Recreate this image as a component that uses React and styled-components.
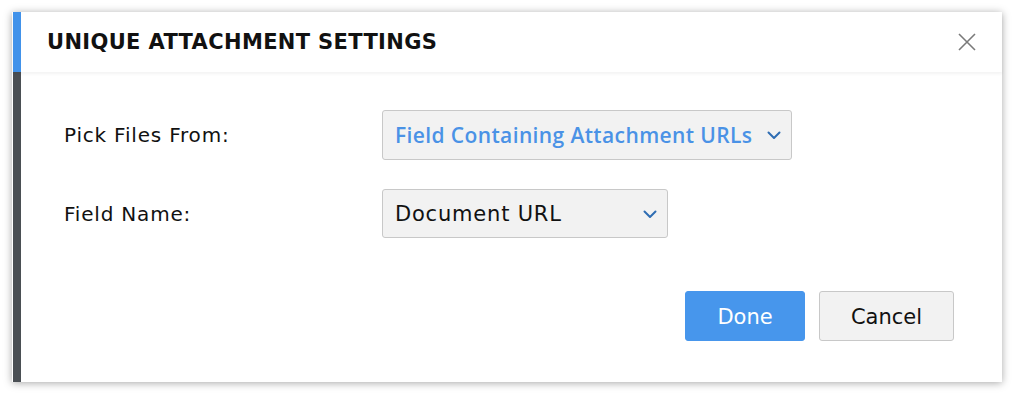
import styled, { createGlobalStyle } from 'styled-components';

const GlobalStyle = createGlobalStyle`
  html, body {
    margin: 0;
    padding: 0;
    background: #ffffff;
  }
  body {
    font-family: "DejaVu Sans", "Open Sans", Arial, sans-serif;
    color: #111;
  }
`;

const Page = styled.div`
  padding: 12px;
`;

const Dialog = styled.div`
  width: 989px;
  height: 370px;
  background: #fff;
  border-left: 1px solid #fff;
  display: flex;
  flex-direction: column;
  box-shadow: 0 1px 8px rgba(0, 0, 0, 0.35);
`;

const Header = styled.div`
  height: 60px;
  flex: none;
  display: flex;
  align-items: center;
  justify-content: space-between;
  padding: 0 24px 0 26px;
  border-left: 8px solid #4192ea;
  box-shadow: 0 2px 3px rgba(0, 0, 0, 0.05);
  position: relative;
  z-index: 1;
`;

const Title = styled.h1`
  margin: 0;
  font-size: 21px;
  font-weight: 700;
  letter-spacing: 0.35px;
  color: #111;
`;

const Close = styled.button`
  border: none;
  background: none;
  padding: 0;
  width: 22px;
  height: 22px;
  display: flex;
  align-items: center;
  justify-content: center;
  cursor: pointer;
`;

const Body = styled.div`
  flex: 1;
  display: flex;
  flex-direction: column;
  padding: 38px 48px 41px 43px;
  border-left: 8px solid #4a4f54;
`;

const Row = styled.div`
  display: grid;
  grid-template-columns: 318px auto;
  align-items: center;
  margin-bottom: ${p => p.$gap || 0}px;
`;

const Label = styled.label`
  font-size: 20px;
  letter-spacing: 0.8px;
  color: #111;
`;

const Select = styled.div`
  width: ${p => p.$width}px;
  height: ${p => p.$height}px;
  box-sizing: border-box;
  background: #f2f2f2;
  border: 1px solid #c8c8c8;
  border-radius: 3px;
  display: flex;
  align-items: center;
  justify-content: space-between;
  padding: 0 9px 0 12px;
  white-space: nowrap;
  font-family: ${p => (p.$accent ? '"Open Sans", Arial, sans-serif' : 'inherit')};
  font-size: 21px;
  font-weight: ${p => (p.$accent ? 600 : 400)};
  letter-spacing: ${p => (p.$accent ? 0.38 : 0.8)}px;
  color: ${p => (p.$accent ? '#4a92e6' : '#111')};
`;

const Footer = styled.div`
  margin-top: auto;
  display: flex;
  justify-content: flex-end;
  gap: 14px;
`;

const Button = styled.button`
  height: 50px;
  width: ${p => p.$width}px;
  padding: 2px 0 0;
  border-radius: 3px;
  font-family: inherit;
  font-size: 21px;
  cursor: pointer;
  background: ${p => (p.$primary ? '#4796ec' : '#f2f2f2')};
  color: ${p => (p.$primary ? '#fff' : '#111')};
  border: 1px solid ${p => (p.$primary ? '#4796ec' : '#c8c8c8')};
`;

const Chevron = () => (
  <svg width="16" height="16" viewBox="0 0 16 16">
    <path d="M2.5 5.5l5.5 5.5 5.5-5.5" fill="none" stroke="#2f6db3" strokeWidth="2" strokeLinecap="round" strokeLinejoin="round" />
  </svg>
);

export default function App() {
  return (
    <>
      <GlobalStyle />
      <Page>
        <Dialog>
          <Header>
            <Title>UNIQUE ATTACHMENT SETTINGS</Title>
            <Close aria-label="Close">
              <svg width="20" height="20" viewBox="0 0 20 20">
                <path d="M2 2l16 16M18 2L2 18" stroke="#7a7a7a" strokeWidth="1.6" />
              </svg>
            </Close>
          </Header>
          <Body>
            <Row $gap={29}>
              <Label>Pick Files From:</Label>
              <Select $width={410} $height={50} $accent>
                Field Containing Attachment URLs
                <Chevron />
              </Select>
            </Row>
            <Row>
              <Label>Field Name:</Label>
              <Select $width={286} $height={49}>
                Document URL
                <Chevron />
              </Select>
            </Row>
            <Footer>
              <Button $primary $width={120}>Done</Button>
              <Button $width={135}>Cancel</Button>
            </Footer>
          </Body>
        </Dialog>
      </Page>
    </>
  );
}
